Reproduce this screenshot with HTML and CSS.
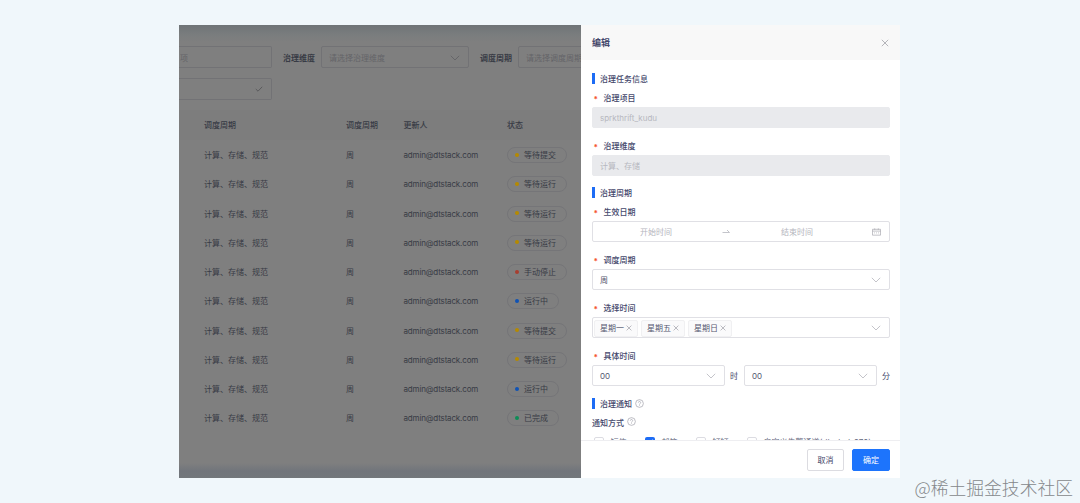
FILE: index.html
```html
<!DOCTYPE html>
<html>
<head>
<meta charset="utf-8">
<title>编辑</title>
<link rel="stylesheet" href="styles.css">
</head>
<body>
<svg class="defs" width="0" height="0">
  <symbol id="down" viewBox="0 0 10 6"><path d="M.8.8 5 5 9.200.8"/></symbol>
  <symbol id="cross" viewBox="0 0 8 8"><path d="M.8.8 7.200 7.200M7.200.8.8 7.200"/></symbol>
  <symbol id="help" viewBox="0 0 10 10"><circle cx="5" cy="5" r="4.300"/><path d="M3.700 4a1.300 1.300 0 1 1 1.900 1.200Q5 5.500 5 6.100M5 7v.7"/></symbol>
</svg>
<div class="app">
  <main class="page">
    <div class="filters">
      <div class="field first"><span>项</span></div>
      <label class="name">治理维度</label>
      <div class="field dim"><span>请选择治理维度</span><svg class="chev"><use href="#down"/></svg></div>
      <label class="name">调度周期</label>
      <div class="field cycle"><span>请选择调度周期</span></div>
    </div>
    <div class="filters">
      <div class="field first"><span></span><svg class="check" viewBox="0 0 8 6"><path d="M.8 3 3 5.200 7.200.8"/></svg></div>
    </div>
    <div class="table">
      <div class="row head"><span>调度周期</span><span>调度周期</span><span>更新人</span><span>状态</span></div>
      <div class="row"><span>计算、存储、规范</span><span>周</span><span class="mail">admin@dtstack.com</span><span class="pill wait">等待提交</span></div>
      <div class="row"><span>计算、存储、规范</span><span>周</span><span class="mail">admin@dtstack.com</span><span class="pill wait">等待运行</span></div>
      <div class="row"><span>计算、存储、规范</span><span>周</span><span class="mail">admin@dtstack.com</span><span class="pill wait">等待运行</span></div>
      <div class="row"><span>计算、存储、规范</span><span>周</span><span class="mail">admin@dtstack.com</span><span class="pill wait">等待运行</span></div>
      <div class="row"><span>计算、存储、规范</span><span>周</span><span class="mail">admin@dtstack.com</span><span class="pill stop">手动停止</span></div>
      <div class="row"><span>计算、存储、规范</span><span>周</span><span class="mail">admin@dtstack.com</span><span class="pill run">运行中</span></div>
      <div class="row"><span>计算、存储、规范</span><span>周</span><span class="mail">admin@dtstack.com</span><span class="pill wait">等待提交</span></div>
      <div class="row"><span>计算、存储、规范</span><span>周</span><span class="mail">admin@dtstack.com</span><span class="pill wait">等待运行</span></div>
      <div class="row"><span>计算、存储、规范</span><span>周</span><span class="mail">admin@dtstack.com</span><span class="pill run">运行中</span></div>
      <div class="row"><span>计算、存储、规范</span><span>周</span><span class="mail">admin@dtstack.com</span><span class="pill done">已完成</span></div>
    </div>
  </main>
  <aside class="drawer">
    <header class="title"><span>编辑</span><svg class="close"><use href="#cross"/></svg></header>
    <div class="form">
      <h3 class="section">治理任务信息</h3>
      <label class="label required">治理项目</label>
      <div class="input disabled">sprkthrift_kudu</div>
      <label class="label required">治理维度</label>
      <div class="input disabled">计算、存储</div>
      <h3 class="section">治理周期</h3>
      <label class="label required">生效日期</label>
      <div class="input range">
        <span>开始时间</span>
        <svg class="arrow" viewBox="0 0 8 6"><path d="M.5 3.500h7L5 1"/></svg>
        <span>结束时间</span>
        <svg class="calendar" viewBox="0 0 10 8"><path d="M.5 1h9v6.500h-9zM.5 3h9M3 0v1.500M7 0v1.500M2.200 5h1M4.500 5h1M6.800 5h1"/></svg>
      </div>
      <label class="label required">调度周期</label>
      <div class="input"><span>周</span><svg class="chev"><use href="#down"/></svg></div>
      <label class="label required">选择时间</label>
      <div class="input tags">
        <span class="tag">星期一<svg><use href="#cross"/></svg></span>
        <span class="tag">星期五<svg><use href="#cross"/></svg></span>
        <span class="tag">星期日<svg><use href="#cross"/></svg></span>
        <svg class="chev"><use href="#down"/></svg>
      </div>
      <label class="label required">具体时间</label>
      <div class="times">
        <div class="input"><span>00</span><svg class="chev"><use href="#down"/></svg></div><span class="unit">时</span>
        <div class="input"><span>00</span><svg class="chev"><use href="#down"/></svg></div><span class="unit">分</span>
      </div>
      <h3 class="section notice">治理通知<svg class="help"><use href="#help"/></svg></h3>
      <label class="label">通知方式<svg class="help"><use href="#help"/></svg></label>
      <div class="checks">
        <span class="option"><i class="box"></i>短信</span>
        <span class="option"><i class="box on"><svg viewBox="0 0 10 10"><path d="M2.200 5 4.300 7 7.800 2.800"/></svg></i>邮箱</span>
        <span class="option"><i class="box"></i>钉钉</span>
        <span class="option"><i class="box"></i>自定义告警通道(dt_alert_670)</span>
      </div>
    </div>
    <footer class="actions"><button class="btn">取消</button><button class="btn primary">确定</button></footer>
  </aside>
</div>
<div class="watermark">@稀土掘金技术社区</div>
</body>
</html>
```

FILE: styles.css
```css
* { box-sizing: border-box; }
body {
  margin: 0;
  width: 1080px;
  height: 503px;
  padding: 25px 0 0 179px;
  overflow: hidden;
  background: #f0f7fb;
  color: #44476b;
  font: 8px/1.500 Inter, "Noto Sans CJK SC", sans-serif;
}
svg { fill: none; stroke: currentColor; stroke-width: .8; flex: none; }
.defs { display: block; position: absolute; }
.app { display: flex; width: 721px; height: 453px; }

.page {
  width: 402px;
  padding-top: 21px;
  overflow: hidden;
  background: linear-gradient(#6f7477, #7a7d7e 10px, #7f7f7f 17px, #7f7f7f 438px, #71757b 446px, #72777b);
  color: #383b45;
}
.filters { display: flex; align-items: center; height: 22px; margin-bottom: 10px; white-space: nowrap; }
.filters > * { flex: none; }
.field {
  display: flex;
  align-items: center;
  justify-content: space-between;
  height: 22px;
  padding: 2px 8px 0 7px;
  border: 1px solid #727275;
  border-radius: 2px;
  color: #646468;
}
.first { width: 93px; padding-left: 1px; border-left: 0; border-radius: 0 2px 2px 0; }
.name { margin: 1px 6px 0 11px; font-weight: 600; }
.dim { width: 148px; }
.cycle { width: 90px; }
.chev { width: 10px; height: 6px; margin-top: -1px; color: #b5b5bd; }
.page .chev { color: #5f5f63; }
.check { width: 8px; height: 6px; margin-top: -2px; color: #505054; }

.row {
  display: grid;
  grid-template-columns: 142px 57.500px 103.500px 1fr;
  align-items: center;
  height: 29.250px;
  padding-left: 25px;
  white-space: nowrap;
}
.head { height: 30.400px; background: #7d7d7d; font-weight: 500; }
.mail { letter-spacing: -.16px; }
.pill {
  display: flex;
  align-items: center;
  justify-self: start;
  height: 16px;
  padding: 0 10px 0 7px;
  border: 1px solid #757578;
  border-radius: 8px;
}
.pill::before { content: ""; width: 4px; height: 4px; margin: -1px 5px 0 0; border-radius: 50%; }
.wait::before { background: #b58a00; }
.stop::before { background: #a83e30; }
.run::before { background: #1053b5; }
.done::before { background: #0d8d57; }

.drawer { display: flex; flex-direction: column; width: 319px; background: #fff; }
.title {
  display: flex;
  align-items: center;
  justify-content: space-between;
  height: 35px;
  padding: 1px 11px 0;
  background: #f8f8f8;
  font-size: 9px;
  font-weight: 600;
}
.close { width: 8px; height: 8px; color: #a2a2a8; }
.form { height: 380px; padding: 10px 10px 0 11px; overflow: hidden; }
.section { display: flex; align-items: center; height: 18px; margin: 0; font-size: 8px; font-weight: 500; }
.section::before { content: ""; width: 3px; height: 11px; margin: -2px 5px 0 0; background: #1d6cf5; }
.notice { margin-top: 9px; }
.label { display: flex; align-items: center; height: 19px; font-weight: 500; }
.required::before { content: "*"; width: 9px; padding: 2px 0 0 1px; margin-right: 1px; color: #f5532d; font-weight: 700; }
.required { padding-left: .5px; }
.help { width: 9px; height: 9px; margin: -2px 0 0 3px; color: #a5a5ae; }
.input {
  display: flex;
  align-items: center;
  justify-content: space-between;
  height: 21px;
  margin-bottom: 8px;
  padding: 1px 8px 0 7px;
  border: 1px solid #e0e0e5;
  border-radius: 2px;
  color: #55586f;
}
.disabled { border-color: #e9eaed; background: #e9eaed; color: #b7b8bf; }
.range {
  display: grid;
  grid-template-columns: 112px 28px 114px 1fr;
  justify-items: center;
  color: #b5b6be;
}
.arrow { width: 8px; height: 6px; }
.calendar { width: 9px; height: 8px; justify-self: end; color: #a9a9b0; }
.tags { justify-content: flex-start; gap: 3px; padding: 1px 8px 0 1px; }
.tags .chev { margin-left: auto; }
.tag {
  display: flex;
  align-items: center;
  gap: 2px;
  height: 17px;
  width: 44px;
  padding: 0 5px;
  border: 1px solid #f0f0f2;
  border-radius: 2px;
  background: #fafafb;
  white-space: nowrap;
}
.tag svg { width: 6px; height: 6px; margin-top: -1px; color: #8e8f9a; }
.times { display: flex; align-items: center; height: 21px; }
.times .input { width: 133px; margin: 0; }
.unit { width: 19px; padding: 1px 0 0 5px; }
.unit:last-child { width: 13px; }
.checks { display: flex; padding-top: 4px; white-space: nowrap; color: #666980; }
.option { display: flex; align-items: center; margin-right: 16.500px; }
.box { width: 10px; height: 10px; margin: 0 7px 0 1.500px; border: 1px solid #dcdce2; border-radius: 2px; }
.on { border: 0; background: #1d6cf5; color: #fff; }
.on svg { display: block; stroke-width: 1.200; }
.actions {
  display: flex;
  justify-content: flex-end;
  align-items: center;
  gap: 8px;
  height: 38px;
  padding-right: 10px;
  border-top: 1px solid #eeeef1;
}
.btn {
  width: 37px;
  height: 22px;
  padding: 1px 0 0;
  border: 1px solid #dcdce1;
  border-radius: 2px;
  background: #fff;
  color: #44476b;
  font: inherit;
}
.primary { width: 38px; border-color: #1d74fc; background: #1d74fc; color: #fff; }
.watermark {
  position: absolute;
  right: 7px;
  bottom: 3px;
  color: #85888b;
  font: 300 17.800px/26px "Noto Sans CJK SC", sans-serif;
}
```
